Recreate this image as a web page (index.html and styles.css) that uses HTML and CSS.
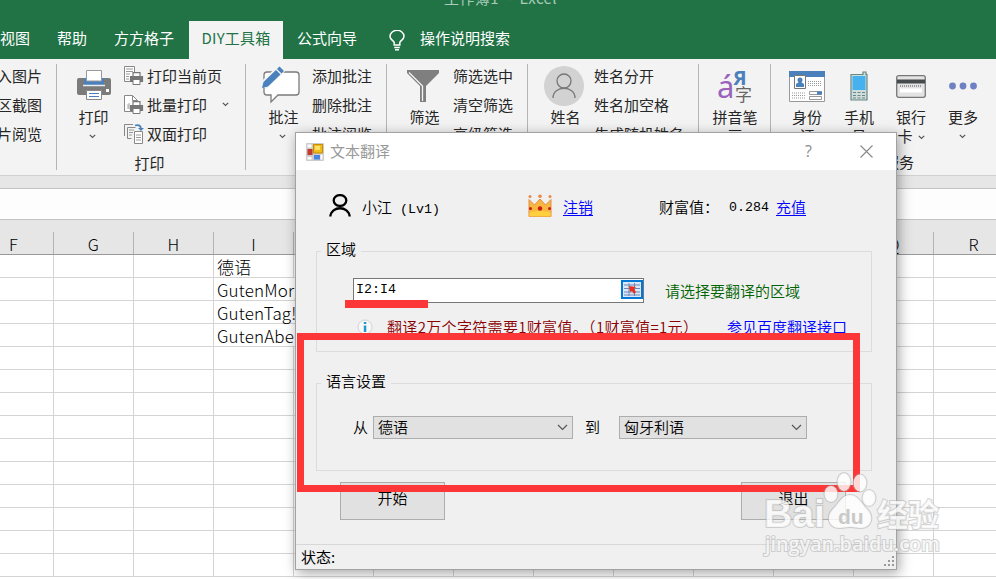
FILE: index.html
```
<!DOCTYPE html>
<html lang="zh-CN">
<head>
<meta charset="utf-8">
<title>工作簿1 - Excel</title>
<link rel="stylesheet" href="styles.css">
</head>
<body>
<svg class="defs" width="0" height="0">
  <symbol id="chev" viewBox="0 0 7 5"><path d="M.8.8 3.5 3.5 6.2.8" fill="none" stroke="#555" stroke-width="1.2"/></symbol>
  <symbol id="mini" viewBox="0 0 14 13"><path d="M3.5 4V.6h7V4M1 4.500h12v5H1z" fill="#fff" stroke="#777" stroke-width="1.2"/><path d="M1 4h12v5H1z" fill="#777"/><path d="M3.500 7.500h7v5h-7z" fill="#fff" stroke="#777"/></symbol>
</svg>
<div class="app">
  <header class="titlebar"><span>工作簿1&nbsp; -&nbsp; Excel</span></header>
  <nav class="tabs">
    <span class="tab first">视图</span><span class="tab help">帮助</span><span class="tab ff">方方格子</span>
    <span class="tab active">DIY工具箱</span><span class="tab wiz">公式向导</span>
    <svg class="bulb" width="16" height="21" viewBox="0 0 16 21" fill="none" stroke="#fff" stroke-width="1.500"><path d="M5.200 15v-2.500C4.500 10.500 1 9.500 1 6.500a7 6 0 0 1 14-.300c0 3.300-3.500 4.300-4.200 6.300V15zM5.200 17.500h5.600M6 19.700h4"/></svg>
    <span class="tab">操作说明搜索</span>
  </nav>
  <section class="ribbon">
    <div class="group g1"><div class="list"><span>入图片</span><span>区截图</span><span>片阅览</span></div></div>
    <div class="group g2">
      <div class="tools">
        <div class="big"><svg width="34" height="32" viewBox="0 0 34 32"><rect y="8" width="34" height="17" rx="2" fill="#7b7b7b"/><path d="M7 8h20v7H7z" fill="#4a80bc"/><path d="M9.500.5h15V11h-15z" fill="#fff" stroke="#999"/><path d="M6 15.500h22" stroke="#eee" stroke-width="1.500"/><path d="M29 19h3v3h-3z" fill="#fff"/><path d="M9.500 20.500h15v9h-15z" fill="#fff" stroke="#888"/><path d="M12 23.500h10M12 26.500h10" stroke="#4a80bc"/></svg><span>打印</span><svg class="chev"><use href="#chev"/></svg></div>
        <div class="list">
          <span><svg width="20" height="20" viewBox="0 0 20 20"><path d="M.5.5h10v15H.5z" fill="#fff" stroke="#888"/><path d="M2 3h7M2 5.500h7M2 8h4M2 10.500h3M2 13h3" stroke="#999"/><use href="#mini" x="5" y="6" width="15" height="13"/></svg>打印当前页</span>
          <span><svg width="20" height="20" viewBox="0 0 20 20"><path d="M.5.5h8l5 5v11H.5z" fill="#fff" stroke="#888"/><path d="M8.500.5v5h5" fill="none" stroke="#888"/><path d="M4 9v5M5 8v6" stroke="#aaa"/><use href="#mini" x="5" y="6" width="15" height="13"/></svg>批量打印<svg class="chev side"><use href="#chev"/></svg></span>
          <span><svg class="duplex" width="20" height="20" viewBox="0 0 20 20"><path d="M.5 12V.5H9M3.500 14.500v-11h8M3.500 14.500h4" fill="none" stroke="#888"/><path d="M5 6h5M5 8.500h4M5 11h3" stroke="#999"/><path d="M10.500 7.500h8v12h-8z" fill="#fff" stroke="#888"/><path d="M12 11h5M12 13.500h5M12 16h5" stroke="#999"/><path d="M11 1.500c4-1 6 0 6 4" fill="none" stroke="#4a80bc" stroke-width="1.800"/><path d="M14 4h6l-3 3z" fill="#4a80bc"/></svg>双面打印</span>
        </div>
      </div>
      <div class="caption">打印</div>
    </div>
    <div class="group g3"><div class="tools">
      <div class="big"><svg class="pen" width="40" height="38" viewBox="0 0 40 38"><path d="M6 6h29a3 3 0 0 1 3 3v17a3 3 0 0 1-3 3H17l-7 7v-7H6a3 3 0 0 1-3-3V9a3 3 0 0 1 3-3z" fill="#fff" stroke="#7b7b7b" stroke-width="1.300"/><path d="M2 20 21 2" stroke="#f3f3f3" stroke-width="9"/><path d="m1 22 1.500-6L15 4l4.500 4.500L7 20.500z" fill="#4a80bc"/><path d="m16 3 2.500-2.500L23 5l-2.500 2.500z" fill="#4a80bc"/></svg><span>批注</span><svg class="chev"><use href="#chev"/></svg></div>
      <div class="list"><span>添加批注</span><span>删除批注</span><span>批注阅览</span></div>
    </div></div>
    <div class="group g4"><div class="tools">
      <div class="big"><svg width="34" height="34" viewBox="0 0 34 34"><path d="M1 1h32v3L20 17v16h-6V17L1 4z" fill="#7f7f7f"/><path d="M3 3.500 16.500 17v15" fill="none" stroke="#f3f3f3" stroke-width="1.300"/></svg><span>筛选</span></div>
      <div class="list"><span>筛选选中</span><span>清空筛选</span><span>高级筛选</span></div>
    </div></div>
    <div class="group g5"><div class="tools">
      <div class="big"><svg class="avatar" width="40" height="40" viewBox="0 0 40 40" fill="none" stroke="#777" stroke-width="1.300"><circle cx="20" cy="20" r="20" fill="#d2d2d2" stroke="none"/><circle cx="20" cy="15" r="7"/><path d="M9 32c0-13 22-13 22 0"/></svg><span>姓名</span></div>
      <div class="list"><span>姓名分开</span><span>姓名加空格</span><span>生成随机姓名</span></div>
    </div></div>
    <div class="group g6"><div class="tools">
      <div class="big"><svg width="36" height="36" viewBox="0 0 36 36"><text class="ic-a" x="0" y="30">á</text><text class="ic-ya" x="16" y="17">Я</text><text class="ic-zi" x="18" y="33">字</text></svg><span>拼音笔<br>画</span></div>
    </div></div>
    <div class="group g7">
      <div class="tools">
        <div class="big"><svg width="36" height="31" viewBox="0 0 36 31"><path d="M.5.5h35v30H.5z" fill="#fff" stroke="#999"/><path d="M0 0h36v6H0z" fill="#4a80bc"/><path d="M5.500 4.500h11v13h-11z" fill="#fff" stroke="#777"/><circle cx="11" cy="9" r="2.500" fill="#4a80bc"/><path d="M7 16v-3l3-2h2l3 2v3z" fill="#4a80bc"/><path d="M19 10.500h14M19 12.500h14M19 14.500h14M3 22h14M3 24.500h14M3 27h14" stroke="#999" stroke-dasharray="1 1"/><path d="M20.500 20.500h12v3h-12zM20.500 25.500h12v3h-12z" fill="#fff" stroke="#999"/><path d="M28 20.500h5v3h-5z" fill="#4a80bc"/></svg><span>身份<br>证</span></div>
        <div class="big"><svg width="18" height="30" viewBox="0 0 18 30"><path d="M1 3.500h12V1h3v2.500h1V29H1z" fill="#cfdcda" stroke="#688" stroke-width="1.200"/><path d="M2.500 5h13v14h-13z" fill="#45b2ef"/><path d="M3 21.500h12M3 24.500h12M3 27h12" stroke="#688" stroke-dasharray="3 1.500"/></svg><span>手机<br>号</span></div>
        <div class="big"><svg width="30" height="23" viewBox="0 0 30 23"><rect x=".7" y=".7" width="28.600" height="21.600" rx="2" fill="#e3e3e3" stroke="#777" stroke-width="1.300"/><path d="M1 4.500h28v4H1z" fill="#454a4a"/><path d="M4 11h22" stroke="#999" stroke-width="2" stroke-dasharray="1 1"/><path d="M4 13.500h22v4H4z" fill="#fff"/></svg><span>银行<br>卡<svg class="chev inline"><use href="#chev"/></svg></span></div>
        <div class="big"><svg width="28" height="8" viewBox="0 0 28 8" fill="#7080c4"><circle cx="3.500" cy="4" r="3.400"/><circle cx="14" cy="4" r="3.400"/><circle cx="24.500" cy="4" r="3.400"/></svg><span>更多</span><svg class="chev"><use href="#chev"/></svg></div>
      </div>
      <div class="caption">服务</div>
    </div>
  </section>
  <div class="spacer"></div>
  <div class="formula"></div>
  <main class="sheet">
    <div class="row head"><i>F</i><i>G</i><i>H</i><i>I</i><i>J</i><i>K</i><i>L</i><i>M</i><i>N</i><i>O</i><i>P</i><i>Q</i><i>R</i></div>
    <div class="row"><i></i><i></i><i></i><i>德语</i><i></i><i></i><i></i><i></i><i></i><i></i><i></i><i></i><i></i></div>
    <div class="row"><i></i><i></i><i></i><i class="over">GutenMorgen!</i><i></i><i></i><i></i><i></i><i></i><i></i><i></i><i></i><i></i></div>
    <div class="row"><i></i><i></i><i></i><i class="over">GutenTag!</i><i></i><i></i><i></i><i></i><i></i><i></i><i></i><i></i><i></i></div>
    <div class="row"><i></i><i></i><i></i><i class="over">GutenAbend!</i><i></i><i></i><i></i><i></i><i></i><i></i><i></i><i></i><i></i></div>
    <div class="row"><i></i><i></i><i></i><i></i><i></i><i></i><i></i><i></i><i></i><i></i><i></i><i></i><i></i></div>
    <div class="row"><i></i><i></i><i></i><i></i><i></i><i></i><i></i><i></i><i></i><i></i><i></i><i></i><i></i></div>
    <div class="row"><i></i><i></i><i></i><i></i><i></i><i></i><i></i><i></i><i></i><i></i><i></i><i></i><i></i></div>
    <div class="row"><i></i><i></i><i></i><i></i><i></i><i></i><i></i><i></i><i></i><i></i><i></i><i></i><i></i></div>
    <div class="row"><i></i><i></i><i></i><i></i><i></i><i></i><i></i><i></i><i></i><i></i><i></i><i></i><i></i></div>
    <div class="row"><i></i><i></i><i></i><i></i><i></i><i></i><i></i><i></i><i></i><i></i><i></i><i></i><i></i></div>
    <div class="row"><i></i><i></i><i></i><i></i><i></i><i></i><i></i><i></i><i></i><i></i><i></i><i></i><i></i></div>
    <div class="row"><i></i><i></i><i></i><i></i><i></i><i></i><i></i><i></i><i></i><i></i><i></i><i></i><i></i></div>
    <div class="row"><i></i><i></i><i></i><i></i><i></i><i></i><i></i><i></i><i></i><i></i><i></i><i></i><i></i></div>
    <div class="row"><i></i><i></i><i></i><i></i><i></i><i></i><i></i><i></i><i></i><i></i><i></i><i></i><i></i></div>
  </main>

  <div class="dialog">
    <div class="dlg-title">
      <svg width="18" height="18" viewBox="0 0 18 18"><rect width="18" height="18" rx="1" fill="#ccc"/><path d="M1.500 1.500h4v3h-4zM1.500 14h4v2.500h-4zM14.500 11.500h2v5h-2z" fill="#fff"/><path d="M1.500 6h5v6h-5z" fill="#c23b2b"/><path d="M7.500 1.500h9v8.500h-9z" fill="#f3bd16" stroke="#c98c00"/><path d="M9 3h5v4H9z" fill="#ffe06a"/><path d="M8 12h6v4.500H8z" fill="#4a86e0"/></svg>
      <span class="name">文本翻译</span><span class="q">?</span>
      <svg class="x" width="13" height="13" viewBox="0 0 13 13"><path d="m.5.5 12 12m0-12-12 12" stroke="#888" stroke-width="1.100"/></svg>
    </div>
    <div class="dlg-body">
      <div class="user">
        <svg width="22" height="23" viewBox="0 0 22 23" fill="none" stroke="#000" stroke-width="2.300"><ellipse cx="11" cy="6.500" rx="6.300" ry="5.400"/><path d="M1.300 22.500c1-11 18.400-11 19.400 0"/></svg>
        <span class="nick">小江<b class="lv">(Lv1)</b></span>
        <svg class="crown" width="24" height="24" viewBox="0 0 24 24"><path d="M1 5.500 6.500 11 12 5l5.500 6L23 5.500V22.500H1z" fill="#f6b840" stroke="#e58c45"/><path d="M1.500 18.500c6-2 15-2 21 0v4h-21z" fill="#ffcf3e"/><g fill="#e88a45"><circle cx="2" cy="2.500" r="1.500"/><circle cx="12" cy="2.300" r="1.800"/><circle cx="22" cy="2.500" r="1.500"/></g><g fill="#cc1b10"><circle cx="2.500" cy="14.500" r="1.500"/><circle cx="12" cy="14.500" r="2.200"/><circle cx="21.500" cy="14.500" r="1.500"/></g></svg>
        <a class="logout">注销</a><span class="wealth">财富值：</span><b class="num">0.284</b><a>充值</a>
      </div>
      <fieldset class="area"><legend>区域</legend>
        <div class="pick"><div class="ref"><b>I2:I4</b><svg width="22" height="19" viewBox="0 0 22 19"><path d="M1 1h20v17H1z" fill="#dbe8f7" stroke="#0078d7" stroke-width="2"/><path d="M3 5h16M3 8.500h16M3 12h16M3 15h16M8 3v13M13.500 3v13" stroke="#6f87b5"/><path d="m8 6 7 1-2 2 2 3-2 2-2-3-2 1z" fill="#e5311d"/></svg></div><span class="hint">请选择要翻译的区域</span></div>
        <div class="info"><svg width="16" height="16" viewBox="0 0 16 16"><circle cx="8" cy="8" r="7" fill="#f8f8f8" stroke="#d3d3d3"/><path d="M6.800 3h2.500v2H6.800zM6.800 6.500h2.500V13H6.800z" fill="#2499cf"/></svg><span class="cost">翻译2万个字符需要1财富值。（1财富值=1元）</span><a class="api">参见百度翻译接口</a></div>
      </fieldset>
      <fieldset class="lang"><legend>语言设置</legend>
        <div class="langs"><span class="lab">从</span><div class="select s1">德语<svg width="11" height="7" viewBox="0 0 11 7"><path d="m1 1 4.500 4.500L10 1" fill="none" stroke="#555" stroke-width="1.200"/></svg></div><span class="to">到</span><div class="select s2">匈牙利语<svg width="11" height="7" viewBox="0 0 11 7"><path d="m1 1 4.500 4.500L10 1" fill="none" stroke="#555" stroke-width="1.200"/></svg></div></div>
      </fieldset>
      <div class="actions"><div class="btn">开始</div><div class="btn">退出</div></div>
    </div>
    <div class="status"><span>状态:</span><svg width="11" height="11" viewBox="0 0 11 11" fill="#999"><path d="M8 0h2v2H8zM8 4h2v2H8zM4 4h2v2H4zM8 8h2v2H8zM4 8h2v2H4zM0 8h2v2H0z"/></svg></div>
  </div>
  <div class="mark-line"></div>
  <div class="mark-box"></div>
  <svg class="watermark" width="190" height="90" viewBox="0 0 190 90">
    <g class="wm">
      <text class="wm-big" x="4" y="57" textLength="61" lengthAdjust="spacingAndGlyphs">Bai</text>
      <ellipse cx="71" cy="24" rx="6.500" ry="8"/><ellipse cx="84" cy="12" rx="6.500" ry="9"/><ellipse cx="100" cy="13" rx="6.500" ry="8.500"/><ellipse cx="109" cy="28" rx="6.500" ry="8"/>
      <path d="M90 25c8 0 11 8 17 14 8 8 4 19-6 19-5 0-7-1-11-1s-6 1-11 1c-10 0-14-11-6-19 6-6 9-14 17-14z"/>
      <text class="wm-cn" x="117" y="56">经验</text>
      <text class="wm-url" x="5" y="81" textLength="175" lengthAdjust="spacingAndGlyphs">jingyan.baidu.com</text>
    </g>
    <text class="wm-du" x="78" y="54">du</text>
  </svg>
</div>
</body>
</html>
```
FILE: styles.css
```
* { box-sizing: border-box; }
body { margin: 0; font-family: "Noto Sans CJK SC", sans-serif; font-size: 15px; color: #262626; }
svg { display: block; flex: none; }
.defs { position: absolute; }
.app { position: relative; width: 996px; height: 579px; overflow: hidden; display: flex; flex-direction: column; background: #fff; }

.titlebar { height: 21px; flex: none; background: #217346; color: #a9cbb7; font-size: 15px; letter-spacing: .4px; overflow: hidden; padding-left: 444px; line-height: 20px; white-space: pre; }
.titlebar span { display: block; margin-top: -12px; }
.tabs { height: 38px; flex: none; background: #217346; color: #fff; display: flex; line-height: 34px; white-space: nowrap; }
.tab.first { width: 57px; }
.tab.help { width: 57px; }
.tab.ff { width: 75px; }
.tab.active { width: 94px; background: #f3f3f3; color: #217346; text-align: center; letter-spacing: .2px; }
.tab.wiz { width: 107px; padding-left: 14px; }
.bulb { margin: 9px 15px 0 -1px; }

.ribbon { height: 117px; flex: none; display: flex; background: #f3f3f3; border-bottom: 1px solid #d0d0d0; }
.group { padding-top: 3px; flex: none; display: flex; flex-direction: column; position: relative; white-space: nowrap; background: linear-gradient(#b5b5b5, #b5b5b5) right 5px / 1px 106px no-repeat; }
.g1 { width: 57px; }
.g2 { width: 189px; padding-left: 6px; }
.g3, .g4 { width: 141px; padding-left: 9px; }
.g5 { width: 171px; padding-left: 9px; }
.g6 { width: 72px; padding-left: 7px; }
.g7 { width: 225px; padding-left: 10px; background: none; }
.tools { display: flex; height: 87px; }
.list { height: 87px; display: flex; flex-direction: column; overflow: hidden; }
.list > span { height: 29px; line-height: 28px; padding-bottom: 2px; display: flex; align-items: center; gap: 3px; }
.list > span > svg { margin-top: 1px; }
.g1 .list { margin-left: -3px; }
.big { width: 61px; flex: none; display: grid; grid-template-rows: 45px auto auto; justify-items: center; align-content: start; text-align: center; line-height: 19px; }
.big > svg:first-child { align-self: center; margin-top: 3px; }
.big > svg.avatar { margin: 3px 0 0 -4px; }
.big > svg.pen { margin: 0 0 0 -6px; }
.g3 .big, .g4 .big, .g5 .big { width: 57px; }
.g4 .big > svg:first-child { margin-left: -3px; }
.g7 .big { width: 52px; }
.g6 .big { width: 58px; }
.chev { width: 7px; height: 5px; margin-top: 7px; }
.list > span > .chev.side { margin: 0 0 0 12px; }
.big > .chev { margin-left: -2px; margin-top: 8px; }
.chev.inline { display: inline-block; margin: 0 0 0 5px; vertical-align: 2px; }
.caption { text-align: center; line-height: 27px; }
.g2 .caption { margin-left: -10px; }
.g7 .caption { text-align: left; padding-left: 103px; }
.ic-a { font: 31px "Noto Sans", sans-serif; fill: #9a62bd; }
.ic-ya { font: bold 20px "Noto Sans", sans-serif; fill: #4a80bc; }
.ic-zi { font: 17px "Noto Sans CJK SC", sans-serif; fill: #666; }

.spacer { height: 13px; flex: none; background: #e6e6e6; border-bottom: 1px solid #c3c3c3; }
.formula { height: 31px; flex: none; background: #fdfdfd; border-bottom: 1px solid #c3c3c3; }
.sheet { margin-left: -26px; width: 1040px; color: #000; font-size: 17px; }
.row { display: grid; grid-template-columns: repeat(13, 80px); height: 23px; border-bottom: 1px solid #d4d4d4; }
.row i { font-style: normal; font-weight: 300; border-right: 1px solid #d4d4d4; padding-left: 3px; line-height: 24px; height: 22px; white-space: nowrap; letter-spacing: .15px; }
.row i.over { border-right-color: transparent; }
.row.head { height: 35px; background: #e6e6e6; border-bottom: 1px solid #999; padding-top: 12px; font-size: 16.5px; }
.row.head i { text-align: center; padding: 0; line-height: 24px; border-right-color: #b4b4b4; }

.dialog { position: absolute; left: 295px; top: 132px; width: 602px; height: 438px; border: 1px solid #a2a2a2; background: #f0f0f0; display: flex; flex-direction: column; color: #000; box-shadow: 2px 3px 12px rgba(0,0,0,.36); }
.dlg-title { height: 37px; flex: none; background: #fff; display: flex; align-items: center; padding-left: 10px; color: #999; }
.dlg-title .name { margin: -2px 0 0 6px; width: 475px; }
.dlg-title .q { width: 55px; margin-top: -2px; font-family: "Open Sans", sans-serif; font-size: 16px; color: #8c8c8c; }
.dlg-body { flex: 1; padding: 0 24px 0 20px; font-weight: 350; }
.dlg-body b { font-family: "Liberation Mono", monospace; font-size: 13.3px; font-weight: 400; }
.user { height: 74px; padding: 0 0 2px 13px; display: flex; align-items: center; white-space: nowrap; }
.user svg { margin-top: -1px; }
.nick { width: 154px; margin-left: 11px; }
.lv { margin-left: 8px; }
.user > .crown { margin: 0 0 0 12px; }
a { color: #00f; text-decoration: underline; text-underline-offset: 2px; }
.logout { margin-left: 11px; width: 30px; }
.wealth { margin-left: 66px; width: 70px; }
.user b.num { width: 47px; padding-top: 3px; }
fieldset { margin: 0; padding: 0; border: 1px solid #dcdcdc; min-width: 0; width: 556px; }
legend { margin-left: 4px; padding: 0 5px; height: 15px; line-height: 9px; }
.area { height: 108px; }
.lang { height: 95px; margin-top: 24px; }
.pick { display: flex; margin: 19px 0 0 36px; height: 25px; }
.ref { width: 291px; border: 1px solid #777; background: #fff; display: flex; align-items: center; justify-content: space-between; padding: 0 0 3px 2px; }
.hint { margin-left: 21px; color: #006400; line-height: 25px; }
.info { display: flex; align-items: center; height: 24px; margin: 12px 0 0 40px; padding-bottom: 1px; white-space: nowrap; }
.cost { color: #8b0000; margin-left: 14px; width: 340px; letter-spacing: .33px; }
.langs { display: flex; align-items: center; margin: 25px 0 0 36px; height: 23px; line-height: 20px; }
.lab { width: 20px; padding-bottom: 2px; }
.select { height: 23px; border: 1px solid #adadad; background: #e1e1e1; display: flex; justify-content: space-between; align-items: center; padding: 0 4px 2px; line-height: 18px; }
.select svg { margin-top: 2px; }
.s1 { width: 200px; }
.s2 { width: 188px; }
.to { width: 46px; padding: 0 0 2px 12px; }
.actions { display: flex; gap: 296px; margin: 11px 0 0 24px; }
.btn { width: 105px; height: 38px; border: 1px solid #adadad; background: #e1e1e1; text-align: center; line-height: 29px; flex: none; }
.status { height: 25px; border-top: 1px solid #d7d7d7; padding: 0 1px 0 5px; display: flex; justify-content: space-between; line-height: 23px; font-size: 15px; }
.status svg { margin-top: 11px; }
.mark-line { position: absolute; left: 345px; top: 300px; width: 83px; height: 8px; background: #fd3737; }
.mark-box { position: absolute; left: 297px; top: 333px; width: 563px; height: 159px; border: 7px solid #fd3737; }
.watermark { position: absolute; left: 760px; top: 470px; }
.wm { fill: #fff; fill-opacity: .8; stroke: #aaa; stroke-opacity: .5; stroke-width: 2; paint-order: stroke; }
.wm-big { font: bold 38px "Liberation Sans", sans-serif; }
.wm-cn { font: bold 31px "Noto Sans CJK SC", sans-serif; }
.wm-url { font: 600 19px "Open Sans", sans-serif; }
.wm-du { font: bold 21px "Liberation Sans", sans-serif; fill: #c9c9c9; }
```
